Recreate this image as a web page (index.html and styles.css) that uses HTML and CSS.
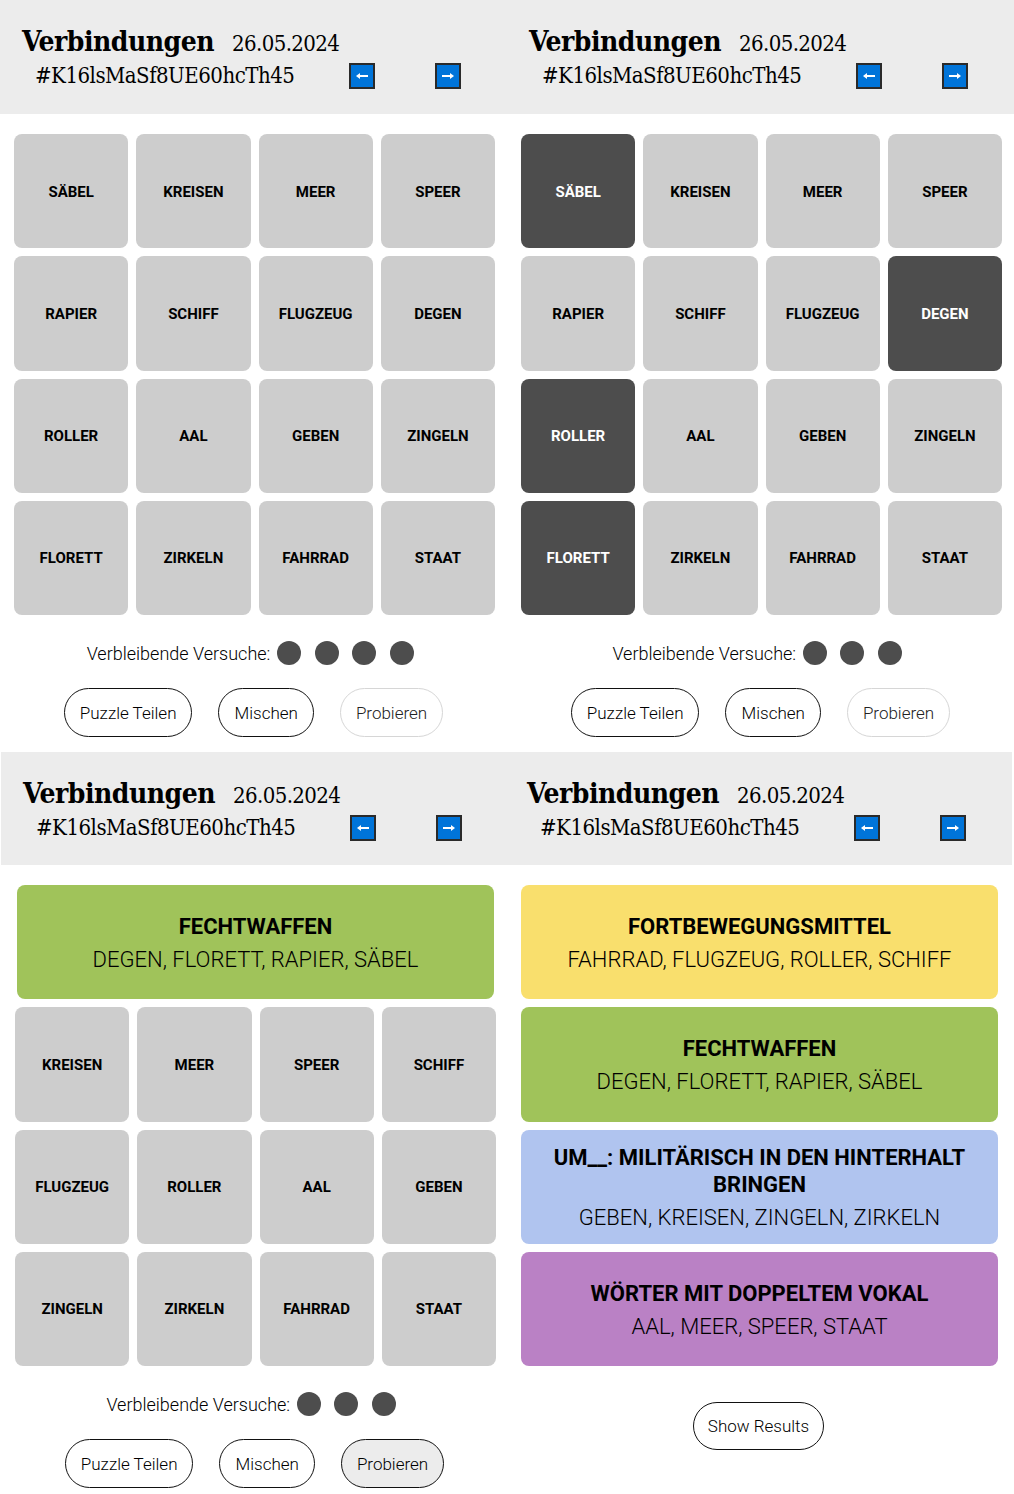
FILE: index.html
```html
<!DOCTYPE html>
<html lang="de">
<head>
<meta charset="utf-8">
<title>Verbindungen</title>
<link rel="stylesheet" href="styles.css">
</head>
<body>
<div class="board">

  <section class="panel">
    <header class="head">
      <div class="head-top"><h1 class="title">Verbindungen</h1><span class="date">26.05.2024</span></div>
      <div class="head-sub">
        <span class="hash">#K16lsMaSf8UE60hcTh45</span>
        <button class="arrow" aria-label="zurück"><svg width="22" height="22" viewBox="0 0 22 22"><path d="M7 11H17" stroke="#fff" stroke-width="2"/><path d="M5 11L9 8V14Z" fill="#fff"/></svg></button>
        <button class="arrow" aria-label="weiter"><svg width="22" height="22" viewBox="0 0 22 22"><path d="M5 11H15" stroke="#fff" stroke-width="2"/><path d="M17 11L13 8V14Z" fill="#fff"/></svg></button>
      </div>
    </header>
    <div class="grid">
      <div class="tile">SÄBEL</div><div class="tile">KREISEN</div><div class="tile">MEER</div><div class="tile">SPEER</div>
      <div class="tile">RAPIER</div><div class="tile">SCHIFF</div><div class="tile">FLUGZEUG</div><div class="tile">DEGEN</div>
      <div class="tile">ROLLER</div><div class="tile">AAL</div><div class="tile">GEBEN</div><div class="tile">ZINGELN</div>
      <div class="tile">FLORETT</div><div class="tile">ZIRKELN</div><div class="tile">FAHRRAD</div><div class="tile">STAAT</div>
    </div>
    <div class="tries"><span class="tries-label">Verbleibende Versuche:</span><span class="dot"></span><span class="dot"></span><span class="dot"></span><span class="dot"></span></div>
    <div class="actions"><button class="pill">Puzzle Teilen</button><button class="pill">Mischen</button><button class="pill pill--disabled">Probieren</button></div>
  </section>

  <section class="panel">
    <header class="head">
      <div class="head-top"><h1 class="title">Verbindungen</h1><span class="date">26.05.2024</span></div>
      <div class="head-sub">
        <span class="hash">#K16lsMaSf8UE60hcTh45</span>
        <button class="arrow" aria-label="zurück"><svg width="22" height="22" viewBox="0 0 22 22"><path d="M7 11H17" stroke="#fff" stroke-width="2"/><path d="M5 11L9 8V14Z" fill="#fff"/></svg></button>
        <button class="arrow" aria-label="weiter"><svg width="22" height="22" viewBox="0 0 22 22"><path d="M5 11H15" stroke="#fff" stroke-width="2"/><path d="M17 11L13 8V14Z" fill="#fff"/></svg></button>
      </div>
    </header>
    <div class="grid">
      <div class="tile tile--on">SÄBEL</div><div class="tile">KREISEN</div><div class="tile">MEER</div><div class="tile">SPEER</div>
      <div class="tile">RAPIER</div><div class="tile">SCHIFF</div><div class="tile">FLUGZEUG</div><div class="tile tile--on">DEGEN</div>
      <div class="tile tile--on">ROLLER</div><div class="tile">AAL</div><div class="tile">GEBEN</div><div class="tile">ZINGELN</div>
      <div class="tile tile--on">FLORETT</div><div class="tile">ZIRKELN</div><div class="tile">FAHRRAD</div><div class="tile">STAAT</div>
    </div>
    <div class="tries"><span class="tries-label">Verbleibende Versuche:</span><span class="dot"></span><span class="dot"></span><span class="dot"></span></div>
    <div class="actions"><button class="pill">Puzzle Teilen</button><button class="pill">Mischen</button><button class="pill pill--disabled">Probieren</button></div>
  </section>

  <section class="panel panel--left">
    <header class="head">
      <div class="head-top"><h1 class="title">Verbindungen</h1><span class="date">26.05.2024</span></div>
      <div class="head-sub">
        <span class="hash">#K16lsMaSf8UE60hcTh45</span>
        <button class="arrow" aria-label="zurück"><svg width="22" height="22" viewBox="0 0 22 22"><path d="M7 11H17" stroke="#fff" stroke-width="2"/><path d="M5 11L9 8V14Z" fill="#fff"/></svg></button>
        <button class="arrow" aria-label="weiter"><svg width="22" height="22" viewBox="0 0 22 22"><path d="M5 11H15" stroke="#fff" stroke-width="2"/><path d="M17 11L13 8V14Z" fill="#fff"/></svg></button>
      </div>
    </header>
    <div class="grid">
      <div class="cat cat--green"><div class="cat-name">FECHTWAFFEN</div><div class="cat-words">DEGEN, FLORETT, RAPIER, SÄBEL</div></div>
      <div class="tile">KREISEN</div><div class="tile">MEER</div><div class="tile">SPEER</div><div class="tile">SCHIFF</div>
      <div class="tile">FLUGZEUG</div><div class="tile">ROLLER</div><div class="tile">AAL</div><div class="tile">GEBEN</div>
      <div class="tile">ZINGELN</div><div class="tile">ZIRKELN</div><div class="tile">FAHRRAD</div><div class="tile">STAAT</div>
    </div>
    <div class="tries"><span class="tries-label">Verbleibende Versuche:</span><span class="dot"></span><span class="dot"></span><span class="dot"></span></div>
    <div class="actions"><button class="pill">Puzzle Teilen</button><button class="pill">Mischen</button><button class="pill pill--active">Probieren</button></div>
  </section>

  <section class="panel panel--right">
    <header class="head">
      <div class="head-top"><h1 class="title">Verbindungen</h1><span class="date">26.05.2024</span></div>
      <div class="head-sub">
        <span class="hash">#K16lsMaSf8UE60hcTh45</span>
        <button class="arrow" aria-label="zurück"><svg width="22" height="22" viewBox="0 0 22 22"><path d="M7 11H17" stroke="#fff" stroke-width="2"/><path d="M5 11L9 8V14Z" fill="#fff"/></svg></button>
        <button class="arrow" aria-label="weiter"><svg width="22" height="22" viewBox="0 0 22 22"><path d="M5 11H15" stroke="#fff" stroke-width="2"/><path d="M17 11L13 8V14Z" fill="#fff"/></svg></button>
      </div>
    </header>
    <div class="grid">
      <div class="cat cat--yellow"><div class="cat-name">FORTBEWEGUNGSMITTEL</div><div class="cat-words">FAHRRAD, FLUGZEUG, ROLLER, SCHIFF</div></div>
      <div class="cat cat--green"><div class="cat-name">FECHTWAFFEN</div><div class="cat-words">DEGEN, FLORETT, RAPIER, SÄBEL</div></div>
      <div class="cat cat--blue"><div class="cat-name">UM__: MILITÄRISCH IN DEN HINTERHALT BRINGEN</div><div class="cat-words">GEBEN, KREISEN, ZINGELN, ZIRKELN</div></div>
      <div class="cat cat--purple"><div class="cat-name">WÖRTER MIT DOPPELTEM VOKAL</div><div class="cat-words">AAL, MEER, SPEER, STAAT</div></div>
    </div>
    <div class="results"><button class="pill pill--results">Show Results</button></div>
  </section>

</div>
</body>
</html>
```

FILE: styles.css
```css
* { box-sizing: border-box; }

body {
  margin: 0;
  background: #fff;
  color: #000;
  font-family: Roboto, "Liberation Sans", sans-serif;
}

.board {
  display: grid;
  grid-template-columns: 507px 507px;
  grid-template-rows: 752px auto;
}

.panel {
  display: flex;
  flex-direction: column;
  width: 507px;
}

.panel--left { margin-left: 1px; }
.panel--right { margin-left: -2px; }

.head {
  background: #ececec;
  height: 114px;
  padding: 25px 0 0 22px;
}

.panel--left .head,
.panel--right .head { height: 113px; }

.head-top {
  display: flex;
  align-items: baseline;
  gap: 18px;
  height: 34px;
}

.title {
  margin: 0;
  font-family: "DejaVu Serif Condensed", "DejaVu Serif", serif;
  font-weight: 700;
  font-size: 28px;
  line-height: 34px;
  letter-spacing: -0.5px;
}

.date {
  font-family: "DejaVu Serif Condensed", "DejaVu Serif", serif;
  font-size: 22px;
  line-height: 34px;
  letter-spacing: -0.6px;
}

.head-sub {
  display: flex;
  align-items: center;
  height: 26px;
  margin: 4px 0 0 13px;
}

.hash {
  width: 314px;
  font-family: "DejaVu Serif Condensed", "DejaVu Serif", serif;
  font-size: 22px;
  line-height: 26px;
  letter-spacing: -0.5px;
}

.arrow {
  width: 26px;
  height: 26px;
  padding: 0;
  border: 2px solid #2a2a2a;
  background: #0074d9;
  display: flex;
  align-items: center;
  justify-content: center;
}

.arrow svg { display: block; }

.arrow + .arrow { margin-left: 60px; }

.grid {
  width: 481px;
  margin: 20px 0 0 14px;
  display: grid;
  grid-template-columns: repeat(4, 1fr);
  grid-auto-rows: 114.25px;
  gap: 8px;
}

.tile {
  background: #cdcdcd;
  border-radius: 8px;
  display: flex;
  align-items: center;
  justify-content: center;
  padding-top: 1px;
  font-weight: 700;
  font-size: 15px;
}

.tile--on {
  background: #4d4d4d;
  color: #fff;
}

.cat {
  grid-column: 1 / -1;
  margin: 0 2px;
  border-radius: 8px;
  display: flex;
  flex-direction: column;
  align-items: center;
  justify-content: center;
  text-align: center;
  padding: 2px 24px 0;
}

.cat-name {
  font-weight: 700;
  font-size: 22px;
  line-height: 27px;
}

.cat-words {
  font-weight: 300;
  font-size: 22px;
  line-height: 27px;
  margin-top: 6px;
}

.cat--yellow { background: #f9df6d; }
.cat--green { background: #a0c35a; }
.cat--blue { background: #b0c4ef; }
.cat--purple { background: #ba81c5; }

.tries {
  display: flex;
  justify-content: center;
  align-items: center;
  height: 24px;
  margin-top: 26px;
  font-weight: 300;
  font-size: 18px;
}

.dot {
  width: 24px;
  height: 24px;
  border-radius: 50%;
  background: #4d4d4d;
  margin: 0 6.75px;
}

.actions {
  display: flex;
  justify-content: center;
  gap: 26px;
  margin-top: 23px;
}

.pill {
  height: 49px;
  padding: 0 15px;
  border: 1px solid #111;
  border-radius: 25px;
  background: #fff;
  color: #000;
  font-family: Roboto, "Liberation Sans", sans-serif;
  font-weight: 300;
  font-size: 17px;
}

.pill--disabled { border-color: #d6d6d6; color: #222; }
.pill--active { background: #ececec; }

.results {
  display: flex;
  justify-content: center;
  margin-top: 36px;
}

.pill--results {
  height: 48px;
  padding: 0 14px;
}
```
